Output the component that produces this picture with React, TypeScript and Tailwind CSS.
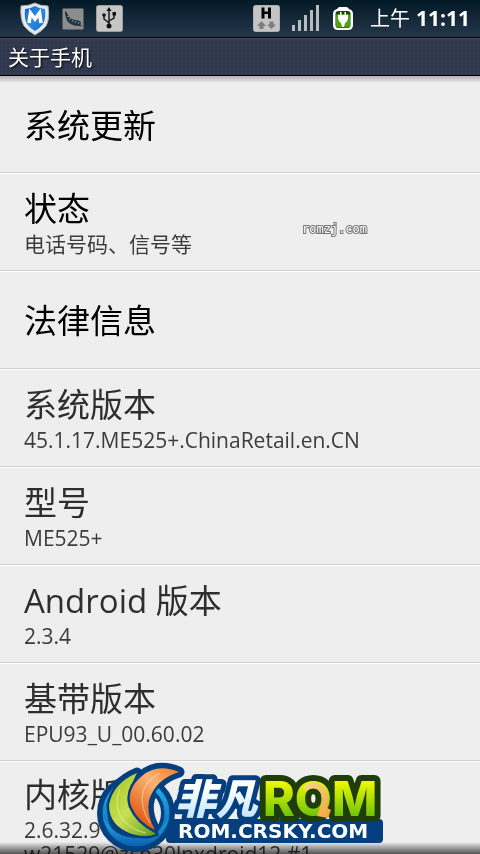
type Item = { title: string; lines?: string[]; action?: boolean }

const ITEMS: Item[] = [
  { title: '系统更新', action: true },
  { title: '状态', lines: ['电话号码、信号等'], action: true },
  { title: '法律信息', action: true },
  { title: '系统版本', lines: ['45.1.17.ME525+.ChinaRetail.en.CN'] },
  { title: '型号', lines: ['ME525+'] },
  { title: 'Android 版本', lines: ['2.3.4'] },
  { title: '基带版本', lines: ['EPU93_U_00.60.02'] },
  { title: '内核版本', lines: ['2.6.32.9', 'w21529@zch30lnxdroid12 #1'] },
]

function ShieldIcon() {
  return (
    <svg width="30" height="34" viewBox="0 0 30 34">
      <defs>
        <linearGradient id="shield" x1="0" y1="0" x2="1" y2="1">
          <stop offset="0" stopColor="#1b62c0" />
          <stop offset="0.5" stopColor="#2a8be6" />
          <stop offset="1" stopColor="#1567c4" />
        </linearGradient>
      </defs>
      <path d="M15 1 Q20 4 28 4 Q30 17 26 24 Q22 29 15 33 Q8 29 4 24 Q0 17 1 4 Q9 4 15 1Z" fill="#e6e8ea" stroke="#a9b0b6" />
      <path d="M15 4 Q20 7 25 7 Q26 17 23 22 Q20 26 15 29 Q10 26 7 22 Q4 17 5 7 Q10 7 15 4Z" fill="url(#shield)" />
      <path d="M9 21 L10.500 11 L15 17 L19.500 11 L21 21" fill="none" stroke="#fff" strokeWidth="3.6" />
    </svg>
  )
}

function FeatherIcon() {
  return (
    <svg width="22" height="22" viewBox="0 0 22 22">
      <rect x="0.5" y="0.5" width="21" height="21" rx="1" fill="#8d8d8d" />
      <path d="M3 3Q5 4 6 7Q8 11 13 12Q17 12 19 14Q19 17 17 18Q10 18 6 14Q3 10 3 3Z" fill="#1e3442" />
      <path d="M5 9L7 8M7 12L9 10M10 14L11 12M13 15L14 13M16 16L17 14" stroke="#8d8d8d" />
      <path d="M15 17L20 18" stroke="#1e3442" />
    </svg>
  )
}

function UsbIcon() {
  return (
    <svg width="27" height="27" viewBox="0 0 27 27">
      <rect x="0.5" y="0.5" width="26" height="26" rx="2" fill="#c6c6c6" stroke="#9d9d9d" />
      <g fill="none" stroke="#111" strokeWidth="1.4">
        <path d="M13 21V4" />
        <path d="M13 18L8 14V10" />
        <path d="M13 16L18 13V9" />
      </g>
      <path d="M13 2L15.500 6H10.500Z" fill="#111" />
      <circle cx="13" cy="21" r="2.500" fill="#111" />
      <circle cx="8" cy="10" r="1.800" fill="#111" />
      <rect x="16.500" y="7" width="3.500" height="3.500" fill="#111" />
    </svg>
  )
}

function HsdpaIcon() {
  return (
    <svg width="27" height="27" viewBox="0 0 27 27">
      <rect x="0.5" y="0.5" width="26" height="26" rx="2" fill="#c4c4c4" stroke="#b0b0b0" />
      <path d="M8.500 2.500h3v4h3.500v-4h3v11h-3V9h-3.500v4.500h-3Z" fill="#000" />
      <path d="M8.500 16L13 21H10.500V24H6.500V21H4Z" fill="#7d7d7d" />
      <path d="M18.500 24L14 19.500H16.500V16.500H20.500V19.500H23Z" fill="#7d7d7d" />
    </svg>
  )
}

function SignalIcon() {
  return (
    <svg width="28" height="27" viewBox="0 0 28 27" fill="#b9bcbe">
      <rect x="0" y="20" width="3" height="6" />
      <rect x="6" y="15" width="3" height="11" />
      <rect x="12" y="10" width="3" height="16" />
      <rect x="18" y="5" width="3" height="21" />
      <rect x="24" y="0" width="3" height="26" />
    </svg>
  )
}

function BatteryIcon() {
  return (
    <svg width="22" height="26" viewBox="0 0 22 26">
      <path d="M5 3Q6 1 8 1H14Q16 1 17 3Q21 4 21 8V19Q21 24 16 24H6Q1 24 1 19V8Q1 4 5 3Z" fill="#fff" />
      <rect x="3.500" y="5" width="15" height="17" rx="3" fill="#253a2a" />
      <rect x="4" y="8" width="14" height="13.500" rx="2" fill="#4fa30a" />
      <path d="M8 6H9.500V9H12.500V6H14V9H16V13Q15 16 13 17L12 21H10L9 17Q7 16 6 13V9H8Z" fill="#fff" />
    </svg>
  )
}

function StatusBar() {
  return (
    <header className="flex h-[38px] shrink-0 items-center justify-between border-b border-black bg-linear-to-b from-[#041a26] to-[#25374c] pr-2.5 pl-5 text-white">
      <div className="flex items-center gap-3">
        <ShieldIcon />
        <FeatherIcon />
        <UsbIcon />
      </div>
      <div className="flex items-center gap-3">
        <HsdpaIcon />
        <SignalIcon />
        <BatteryIcon />
        <time className="ml-1 flex items-baseline gap-1.5 text-[20px] leading-6">
          上午 <b className="text-[21px] font-bold">11:11</b>
        </time>
      </div>
    </header>
  )
}

function rowPadding(lines: string[] = []) {
  if (lines.length === 0) return 'pt-[26px]'
  return lines.length === 1 ? 'pt-3' : 'pt-2.5'
}

function Row({ item }: { item: Item }) {
  return (
    <li
      className={`min-h-[98px] border-t border-b border-t-white border-b-[#cfcfcf] px-6 first:min-h-[97px] first:border-t-transparent ${
        item.action ? 'text-black' : 'text-[#2e2e2e]'
      } ${rowPadding(item.lines)}`}
    >
      <h2 className="text-[33px] leading-[46px]">{item.title}</h2>
      {item.lines?.map((line) => (
        <p key={line} className="text-[21px] leading-6 text-[#3c3c3c]">
          {line}
        </p>
      ))}
    </li>
  )
}

function RomLogo() {
  return (
    <svg width="290" height="92" viewBox="0 0 290 92" className="absolute bottom-0 left-24">
      <defs>
        <linearGradient id="lime" x1="0" y1="0" x2="1" y2="1">
          <stop offset="0" stopColor="#9fc51e" />
          <stop offset="0.5" stopColor="#c9df55" />
          <stop offset="1" stopColor="#5fa014" />
        </linearGradient>
        <linearGradient id="orange" x1="1" y1="0" x2="0.3" y2="1">
          <stop offset="0" stopColor="#f47b20" />
          <stop offset="0.4" stopColor="#fbb573" />
          <stop offset="1" stopColor="#e0520c" />
        </linearGradient>
        <linearGradient id="water" x1="0" y1="0" x2="0" y2="1">
          <stop offset="0" stopColor="#20b4e8" />
          <stop offset="1" stopColor="#0a5fb0" />
        </linearGradient>
        <linearGradient id="rom" x1="0" y1="0" x2="0" y2="1">
          <stop offset="0.2" stopColor="#f2fa00" />
          <stop offset="0.8" stopColor="#6dc30a" />
        </linearGradient>
        <linearGradient id="ice" x1="0" y1="0" x2="0" y2="1">
          <stop offset="0.3" stopColor="#fff" />
          <stop offset="1" stopColor="#b5e0fa" />
        </linearGradient>
        <linearGradient id="arrow" x1="0" y1="0" x2="1" y2="1">
          <stop offset="0" stopColor="#f6d98a" />
          <stop offset="1" stopColor="#f5a53a" />
        </linearGradient>
      </defs>
      <rect x="70" y="57" width="217" height="24" rx="4" fill="#063f80" />

      {/* ring and crescents */}
      <circle cx="40" cy="51" r="32" fill="none" stroke="#063f80" strokeWidth="14" />
      <g stroke="#063f80" strokeWidth="11" strokeLinejoin="round" fill="#063f80">
        <path d="M41 11Q17 21 13 43Q13 64 36 72Q50 76 60 72Q43 62 36 45Q31 29 41 11Z" />
        <path d="M83 10Q61 1 46 14Q30 27 35 44Q42 60 59 68Q50 52 53 38Q60 17 83 10Z" />
      </g>
      <circle cx="40" cy="51" r="31" fill="none" stroke="url(#water)" strokeWidth="5" />
      <path d="M8 56Q14 82 40 84Q66 82 72 56Q63 77 42 76Q18 76 8 56Z" fill="url(#water)" />
      <g stroke="#063f80" strokeWidth="5" strokeLinejoin="round" paintOrder="stroke">
        <path d="M41 11Q17 21 13 43Q13 64 36 72Q50 76 60 72Q43 62 36 45Q31 29 41 11Z" fill="url(#lime)" />
        <path d="M83 10Q61 1 46 14Q30 27 35 44Q42 60 59 68Q50 52 53 38Q60 17 83 10Z" fill="url(#orange)" />
      </g>
      <path d="M24 27Q16 45 28 59Q38 69 50 71" fill="none" stroke="#e6f2a0" strokeOpacity="0.7" />
      <path d="M64 11Q46 20 46 37Q47 51 54 61" fill="none" stroke="#ffe0c0" strokeOpacity="0.7" />

      <g strokeLinejoin="round" paintOrder="stroke">
        <text x="79" y="52" fontSize="41" className="font-black italic" fill="url(#ice)" stroke="#063f80" strokeWidth="10">非凡</text>
        <text x="82" y="76" fontSize="20" className="font-['DejaVu_Sans'] font-bold" fill="#fff">ROM.CRSKY.COM</text>
        <text x="167" y="54" fontSize="48" className="font-[Inter] font-extrabold" fill="url(#rom)" stroke="#1f3d08" strokeWidth="12">ROM</text>
      </g>
      <path d="M207 25Q217 16 227 24Q235 33 231 46L235 48L232 56L221 54L225 43Q228 33 222 28Q216 24 211 29Z" fill="url(#arrow)" />
    </svg>
  )
}

export default function App() {
  return (
    <div className="relative flex h-screen flex-col overflow-hidden bg-[#eeeeee] font-['Open_Sans','Noto_Sans_CJK_SC',sans-serif]">
      <StatusBar />
      <div className="flex h-[38px] shrink-0 items-center border-t border-b border-t-[#454d62] border-b-black bg-[#2f384d] bg-[radial-gradient(#363f55_1px,transparent_1px)] bg-size-[4px_4px] px-2">
        <h1 className="text-[21px] leading-8 text-white text-shadow-[1px_1px_2px_#000]">关于手机</h1>
      </div>
      <ul className="min-h-0 flex-1 overflow-hidden bg-linear-to-b from-[#b4b0b4] to-[#eeeeee] to-[7px]">
        {ITEMS.map((item) => (
          <Row key={item.title} item={item} />
        ))}
      </ul>
      <span className="absolute top-[221px] left-[302px] font-['DejaVu_Sans_Mono',monospace] text-[12px] leading-4 text-white [-webkit-text-stroke:2px_#777] [paint-order:stroke_fill]">
        romzj.com
      </span>
      <div className="absolute inset-x-0 bottom-0 h-3 bg-linear-to-b from-white to-[#5a5a5a] mix-blend-multiply" />
      <RomLogo />
    </div>
  )
}
